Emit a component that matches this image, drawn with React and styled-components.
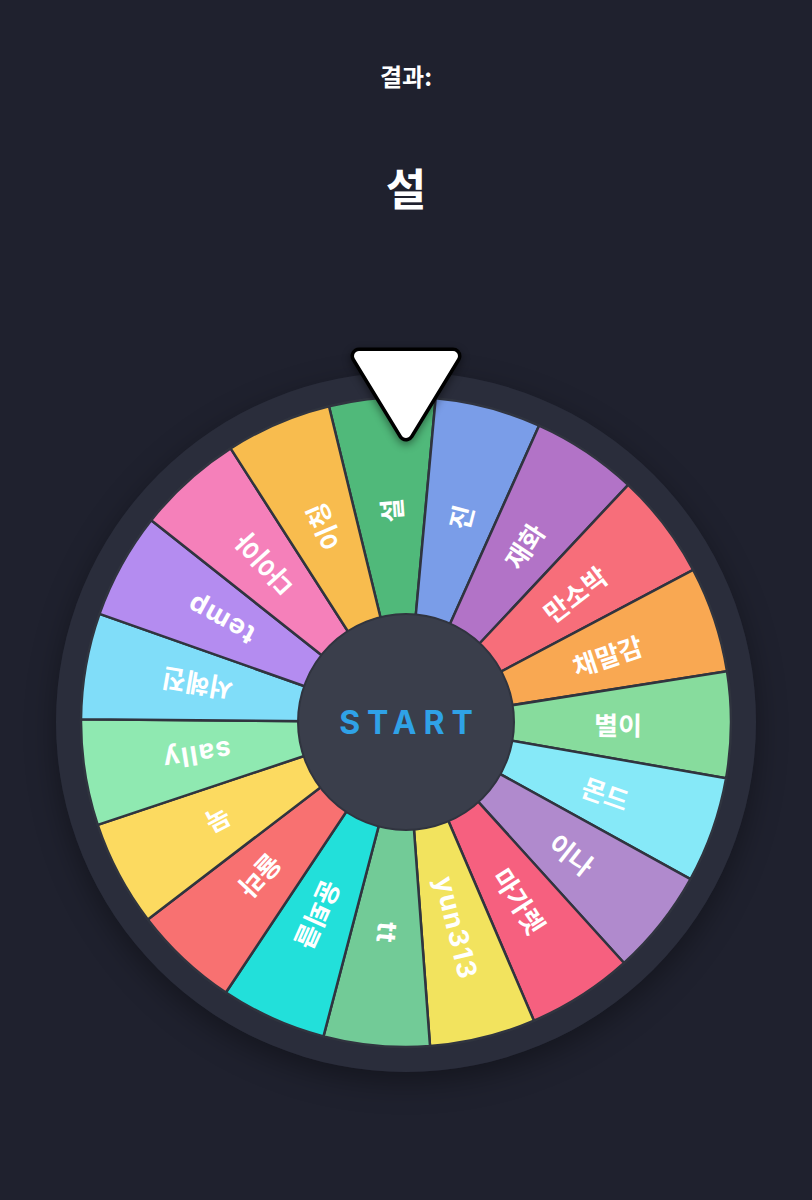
import React from "react";
import styled, { createGlobalStyle } from "styled-components";

const GlobalStyle = createGlobalStyle`
  html, body {
    margin: 0;
    padding: 0;
    background: #1f212e;
  }
  body {
    font-family: "Noto Sans", "Noto Sans CJK KR", sans-serif;
    color: #ffffff;
  }
`;

const Page = styled.main`
  width: 812px;
  min-height: 1200px;
  display: flex;
  flex-direction: column;
  align-items: center;
  background: #1f212e;
`;

const ResultLabel = styled.h2`
  margin: 61px 0 0;
  font-family: "Noto Sans CJK KR", "Noto Sans", sans-serif;
  font-size: 24px;
  line-height: 30px;
  font-weight: 700;
  color: #ffffff;
`;

const ResultValue = styled.h1`
  margin: 69px 0 0;
  font-family: "Noto Sans CJK KR", "Noto Sans", sans-serif;
  font-size: 44px;
  line-height: 54px;
  font-weight: 700;
  color: #ffffff;
`;

const WheelWrap = styled.div`
  position: relative;
  width: 700px;
  height: 700px;
  margin-top: 158px;
  border-radius: 50%;
  box-shadow: 0 10px 30px rgba(0, 0, 0, 0.35);
`;

const WheelSvg = styled.svg`
  display: block;
  width: 700px;
  height: 700px;
`;

const Label = styled.text`
  font-family: ${(p) =>
    p.$latin ? `"Inter", "Noto Sans", sans-serif` : `"Noto Sans CJK KR", "Noto Sans", sans-serif`};
  font-size: ${(p) => (p.$latin ? "27px" : "26px")};
  letter-spacing: ${(p) => (p.$latin ? "1.5px" : "0")};
  font-weight: 700;
  fill: #ffffff;
`;

const Pointer = styled.svg`
  position: absolute;
  left: 50%;
  top: -28px;
  width: 130px;
  height: 110px;
  transform: translateX(-50%);
  filter: drop-shadow(0 3px 4px rgba(0, 0, 0, 0.45));
  z-index: 2;
`;

const StartButton = styled.button`
  position: absolute;
  left: 50%;
  top: 50%;
  transform: translate(-50%, -50%);
  width: 216px;
  height: 216px;
  border-radius: 50%;
  border: none;
  background: transparent;
  color: #2fa2e7;
  font-family: "Inter", "Noto Sans", sans-serif;
  font-size: 32px;
  font-weight: 700;
  letter-spacing: 7px;
  padding: 0 0 0 7px;
  cursor: pointer;
`;

const segments = [
  { name: "설", color: "#50b97a" },
  { name: "진", color: "#7a9de8" },
  { name: "재화", color: "#b273c7" },
  { name: "만소박", color: "#f76e7a" },
  { name: "채말감", color: "#f9a852" },
  { name: "별이", color: "#87dc9d" },
  { name: "몬드", color: "#86e9f8" },
  { name: "이나", color: "#b08acd" },
  { name: "마가렛", color: "#f6607f" },
  { name: "yun313", color: "#f2e35e", latin: true },
  { name: "tt", color: "#72cb97", latin: true },
  { name: "윤퇴클", color: "#22e0da" },
  { name: "율라", color: "#f87171" },
  { name: "묵", color: "#fcda60" },
  { name: "sally", color: "#8fe9b1", latin: true },
  { name: "서혜진", color: "#80ddf9" },
  { name: "temp", color: "#b48cf0", latin: true },
  { name: "다이아", color: "#f580ba" },
  { name: "이칭", color: "#f8bc4e" },
];

const C = 350;
const R = 325;
const OFFSET = -4.24;

const pt = (deg, r) => {
  const a = (deg * Math.PI) / 180;
  return [C + r * Math.sin(a), C - r * Math.cos(a)];
};

export default function App() {
  const step = 360 / segments.length;
  return (
    <>
      <GlobalStyle />
      <Page>
        <ResultLabel>결과:</ResultLabel>
        <ResultValue>설</ResultValue>
        <WheelWrap>
          <Pointer viewBox="0 0 130 110">
            <polygon
              points="18,12 112,12 65,89"
              fill="#000"
              stroke="#000"
              strokeWidth="17"
              strokeLinejoin="round"
            />
            <polygon
              points="18,12 112,12 65,89"
              fill="#fff"
              stroke="#fff"
              strokeWidth="10"
              strokeLinejoin="round"
            />
          </Pointer>
          <WheelSvg viewBox="0 0 700 700">
            <circle cx={C} cy={C} r={350} fill="#2a2d3b" />
            {segments.map((s, i) => {
              const mid = OFFSET + i * step;
              const a0 = mid - step / 2;
              const a1 = mid + step / 2;
              const [x0, y0] = pt(a0, R);
              const [x1, y1] = pt(a1, R);
              return (
                <path
                  key={s.name}
                  d={`M${C},${C} L${x0},${y0} A${R},${R} 0 0 1 ${x1},${y1} Z`}
                  fill={s.color}
                  stroke="#30343f"
                  strokeWidth="2.5"
                  strokeLinejoin="round"
                />
              );
            })}
            {segments.map((s, i) => {
              const mid = OFFSET + i * step;
              const [x, y] = pt(mid, 212);
              return (
                <Label
                  key={s.name + "-t"}
                  $latin={s.latin}
                  x={x}
                  y={y}
                  textAnchor="middle"
                  dominantBaseline="central"
                  transform={`rotate(${mid - 90} ${x} ${y})`}
                >
                  {s.name}
                </Label>
              );
            })}
            <circle cx={C} cy={C} r={108} fill="#3a3e4b" stroke="#30343f" strokeWidth="2" />
          </WheelSvg>
          <StartButton type="button">START</StartButton>
        </WheelWrap>
      </Page>
    </>
  );
}
